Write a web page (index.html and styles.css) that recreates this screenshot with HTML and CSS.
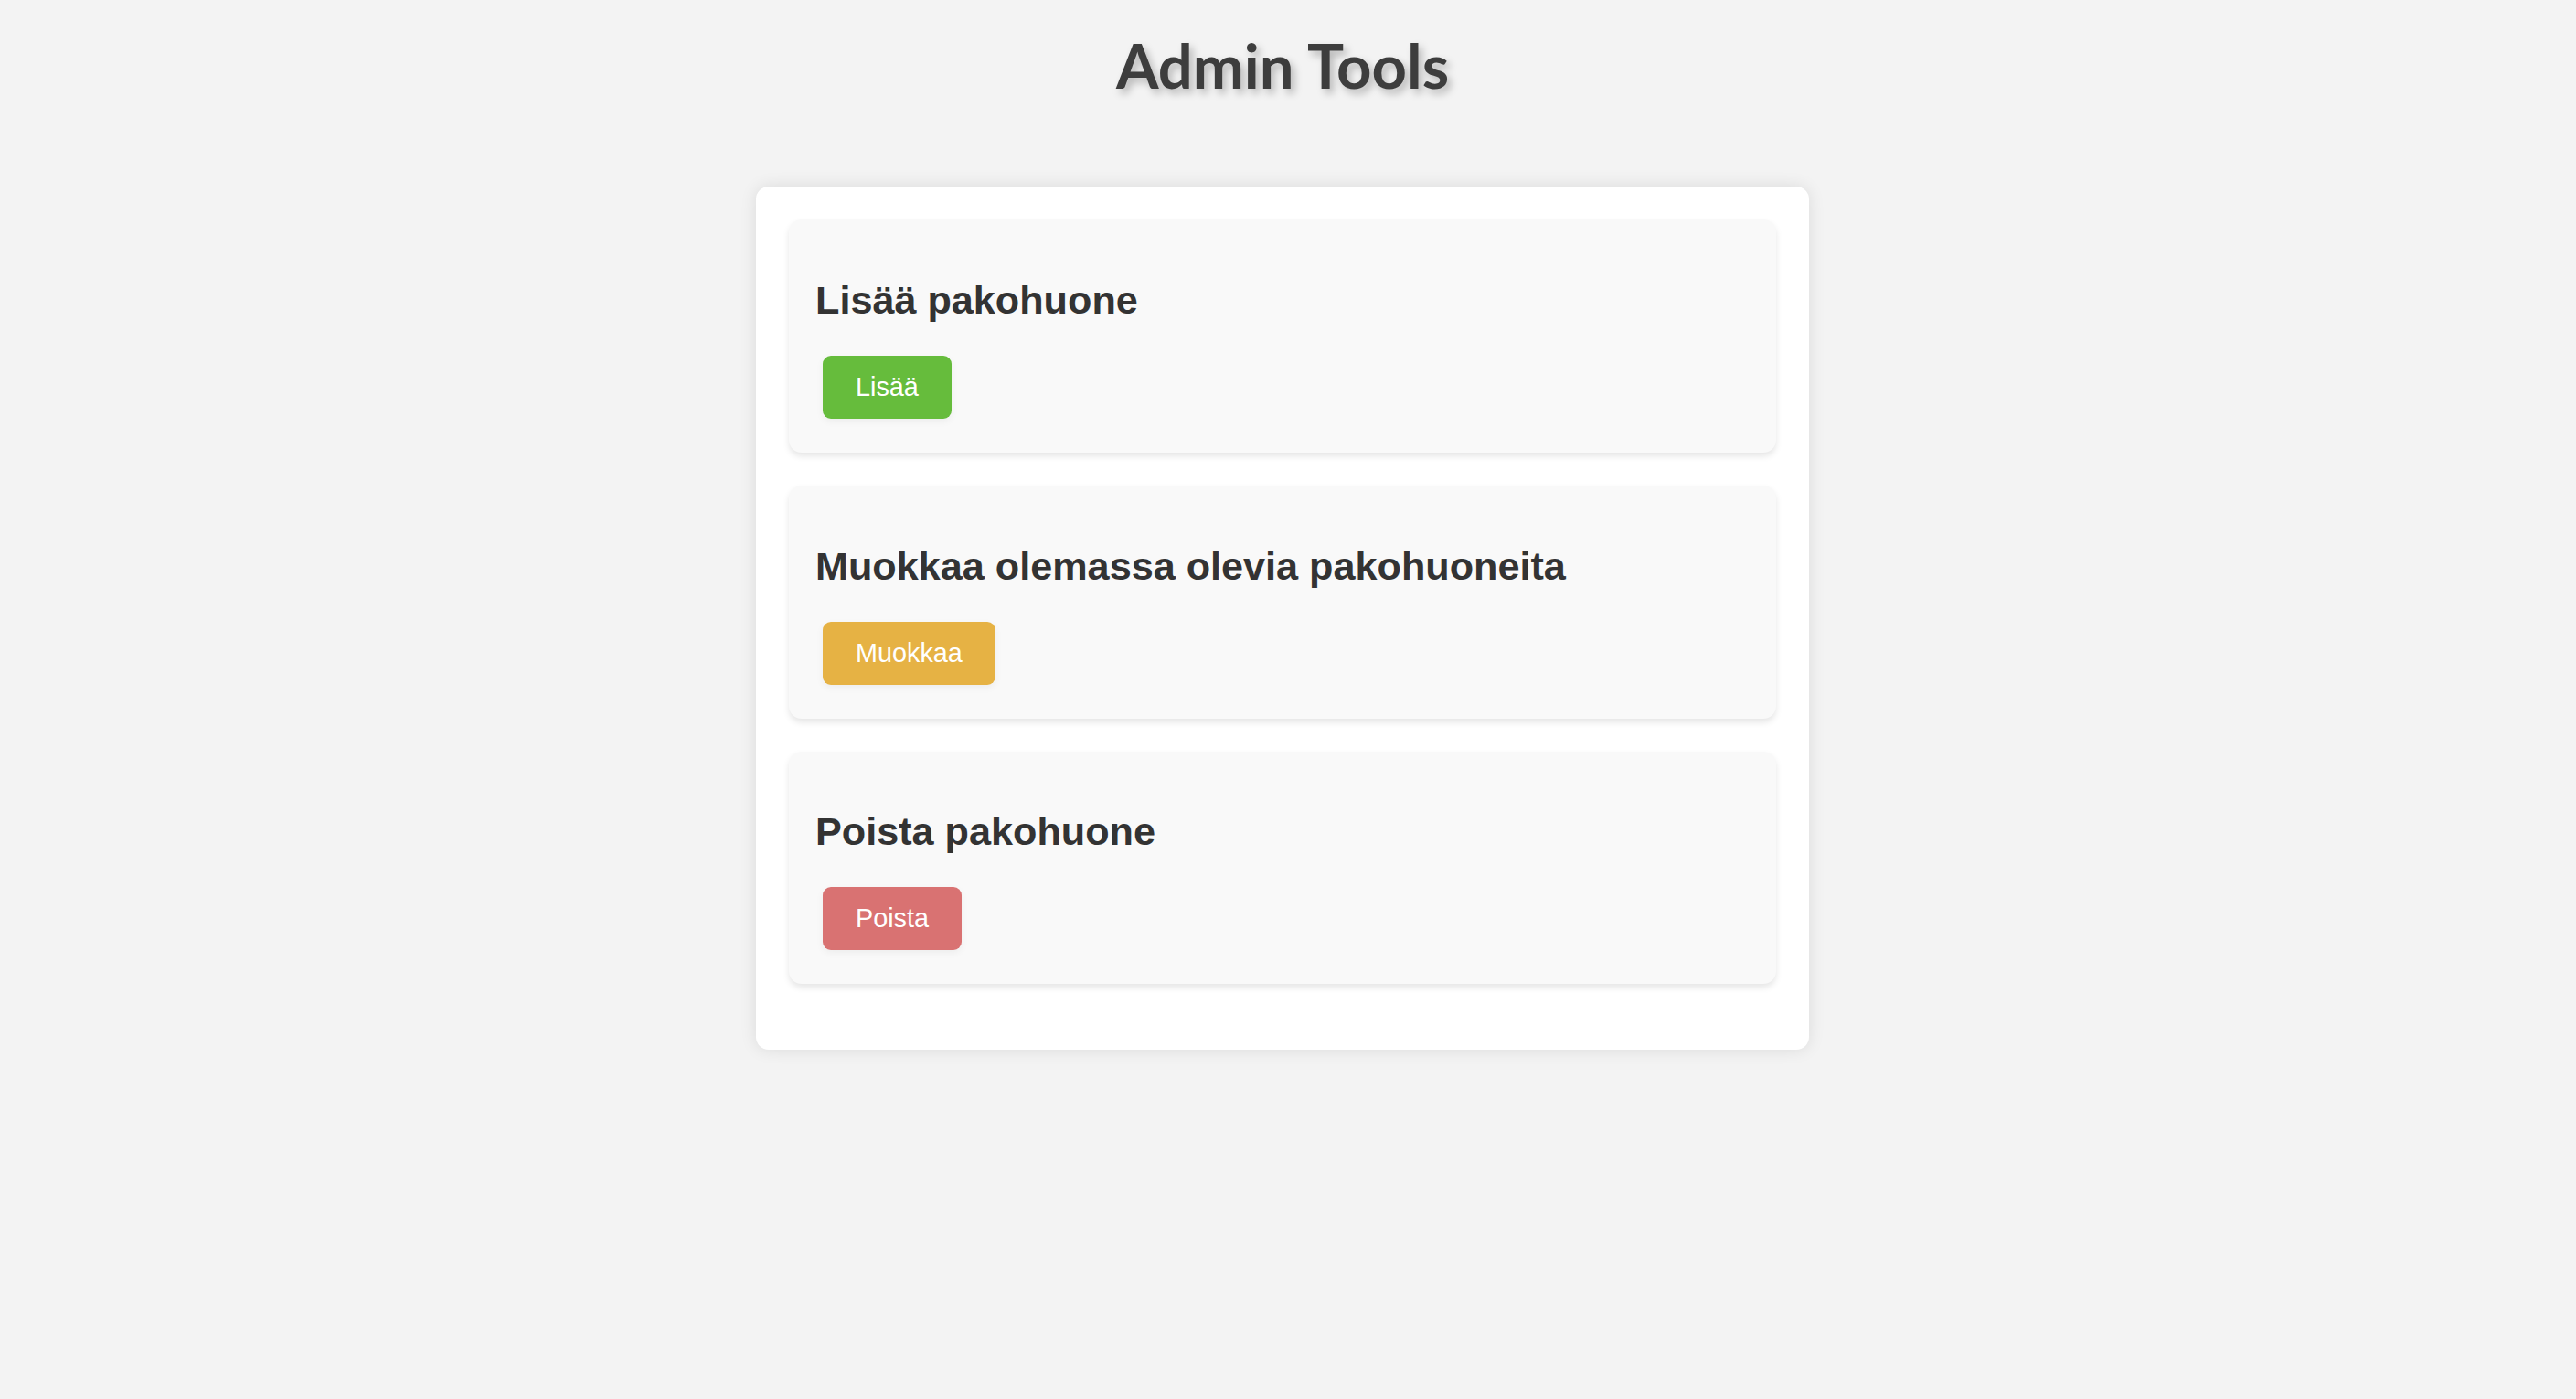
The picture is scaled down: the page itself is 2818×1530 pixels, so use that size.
FILE: index.html
```html
<!DOCTYPE html>
<html lang="fi">
<head>
<meta charset="utf-8">
<title>Admin Tools</title>
<link rel="stylesheet" href="styles.css">
</head>
<body>
<h1 class="page-title">Admin Tools</h1>
<main class="panel">
  <section class="tool-card">
    <h2 class="tool-title">Lisää pakohuone</h2>
    <div class="tool-actions"><button class="btn btn-add">Lisää</button></div>
  </section>
  <section class="tool-card">
    <h2 class="tool-title">Muokkaa olemassa olevia pakohuoneita</h2>
    <div class="tool-actions"><button class="btn btn-edit">Muokkaa</button></div>
  </section>
  <section class="tool-card">
    <h2 class="tool-title">Poista pakohuone</h2>
    <div class="tool-actions"><button class="btn btn-delete">Poista</button></div>
  </section>
</main>
</body>
</html>
```

FILE: styles.css
```css
html, body {
  margin: 0;
  padding: 0;
}
body {
  background: #f3f3f3;
  font-family: "Liberation Sans", Arial, sans-serif;
  padding-right: 12px;
  min-height: 1530px;
  box-sizing: border-box;
}
.page-title {
  margin: 31px 0 0 0;
  font-family: Lato, "Open Sans", sans-serif;
  font-weight: 700;
  font-size: 67px;
  line-height: 1.2;
  color: #3d3d3d;
  text-align: center;
  text-shadow: 4px 5px 9px rgba(0, 0, 0, 0.25);
}
.panel {
  width: 1152px;
  box-sizing: border-box;
  margin: 93px auto 0;
  padding: 36px 36px 72px;
  background: #ffffff;
  border-radius: 14px;
  box-shadow: 0 0 18px rgba(0, 0, 0, 0.1);
  display: flex;
  flex-direction: column;
  gap: 36px;
}
.tool-card {
  background: #f9f9f9;
  border-radius: 14px;
  padding: 28.8px 28.8px 28.8px 29px;
  box-shadow: 0 4px 7px rgba(0, 0, 0, 0.1);
}
.tool-title {
  margin: 35px 0 36px;
  font-size: 43.2px;
  font-weight: 700;
  line-height: 49px;
  color: #333333;
}
.tool-actions {
  display: flex;
  padding: 0 0 8px 8px;
}
.btn {
  font-family: "Liberation Sans", Arial, sans-serif;
  font-size: 28.8px;
  line-height: 33px;
  color: #ffffff;
  border: none;
  border-radius: 9px;
  padding: 18px 36px;
  box-shadow: 0 3px 9px rgba(0, 0, 0, 0.05);
  cursor: pointer;
}
.btn-add { background: #66bc3c; }
.btn-edit { background: #e6b244; }
.btn-delete { background: #d97272; }
```
